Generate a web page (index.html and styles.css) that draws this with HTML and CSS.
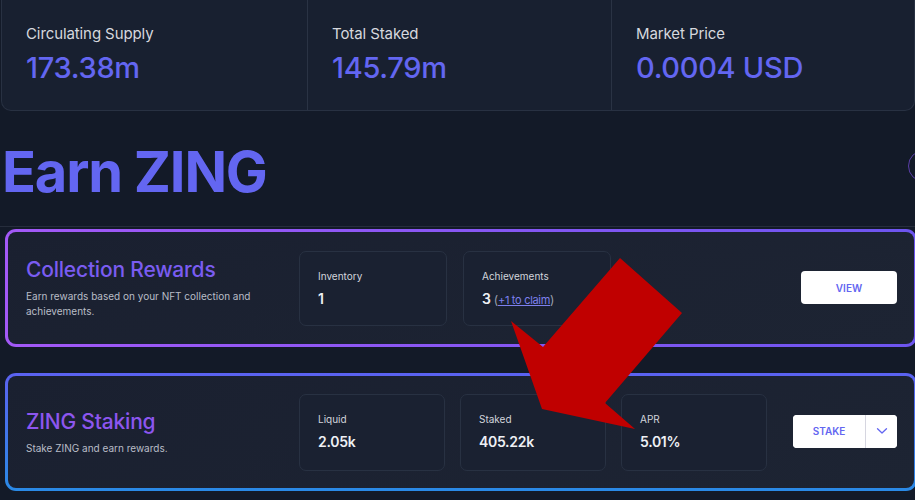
FILE: index.html
```html
<!DOCTYPE html>
<html>
<head>
<meta charset="utf-8">
<link rel="stylesheet" href="styles.css">
</head>
<body>
<div class="page">
  <div class="stats">
    <div class="stat">
      <div class="stat-label">Circulating Supply</div>
      <div class="stat-value">173.38m</div>
    </div>
    <div class="stat">
      <div class="stat-label">Total Staked</div>
      <div class="stat-value">145.79m</div>
    </div>
    <div class="stat">
      <div class="stat-label">Market Price</div>
      <div class="stat-value">0.0004 USD</div>
    </div>
  </div>

  <div class="heading-row">
    <h1 class="title">Earn ZING</h1>
    <div class="round-btn"></div>
  </div>
  <div class="divider"></div>

  <div class="card card-purple">
    <div class="card-intro">
      <h2 class="card-title title-collection">Collection Rewards</h2>
      <p class="card-desc">Earn rewards based on your NFT collection and achievements.</p>
    </div>
    <div class="boxes">
      <div class="box box-wide">
        <div class="box-label">Inventory</div>
        <div class="box-value">1</div>
      </div>
      <div class="box box-wide">
        <div class="box-label">Achievements</div>
        <div class="box-value">3 <span class="paren">(</span><a class="claim">+1 to claim</a><span class="paren">)</span></div>
      </div>
    </div>
    <div class="actions">
      <button class="btn btn-view">VIEW</button>
    </div>
  </div>

  <div class="card card-blue">
    <div class="card-intro">
      <h2 class="card-title title-staking">ZING Staking</h2>
      <p class="card-desc">Stake ZING and earn rewards.</p>
    </div>
    <div class="boxes boxes-three">
      <div class="box">
        <div class="box-label">Liquid</div>
        <div class="box-value">2.05k</div>
      </div>
      <div class="box">
        <div class="box-label">Staked</div>
        <div class="box-value">405.22k</div>
      </div>
      <div class="box">
        <div class="box-label">APR</div>
        <div class="box-value">5.01%</div>
      </div>
    </div>
    <div class="actions">
      <div class="split-btn">
        <button class="split-main">STAKE</button>
        <button class="split-toggle">
          <svg width="12" height="8" viewBox="0 0 12 8"><path d="M1.5 1.8 L6 6 L10.5 1.8" fill="none" stroke="#6366f1" stroke-width="1.3" stroke-linecap="round" stroke-linejoin="round"/></svg>
        </button>
      </div>
    </div>
  </div>

  <svg class="arrow" width="915" height="500" viewBox="0 0 915 500">
    <polygon points="620,258 682,313 605,403 635,429 542,409 511,321 543,347" fill="#c00000"/>
  </svg>
</div>
</body>
</html>
```

FILE: styles.css
```css
* { box-sizing: border-box; }

html, body {
  margin: 0;
  padding: 0;
  width: 915px;
  height: 500px;
  overflow: hidden;
  background: #131a28;
  font-family: Inter, "Noto Sans", "DejaVu Sans", sans-serif;
}

.page {
  position: relative;
  width: 915px;
  height: 500px;
}

/* Top stats panel */
.stats {
  display: grid;
  grid-template-columns: 305px 304px 1fr;
  margin-left: 1px;
  width: 914px;
  height: 111px;
  background: #182030;
  border: 1px solid #283142;
  border-top: 0;
  border-radius: 0 0 10px 10px;
}

.stat {
  padding: 24px 0 0 24px;
}

.stat + .stat {
  border-left: 1px solid #2a3344;
}

.stat-label {
  font-size: 15px;
  line-height: 20px;
  color: #d6d8de;
  letter-spacing: -0.1px;
}

.stat-value {
  margin-top: 7px;
  font-size: 29px;
  line-height: 34px;
  color: #6366f1;
  font-weight: 500;
  letter-spacing: -0.3px;
}

/* Heading */
.heading-row {
  display: flex;
  align-items: center;
  justify-content: space-between;
  height: 115px;
}

.title {
  margin: 6px 0 0 2px;
  font-size: 56px;
  line-height: 64px;
  font-weight: 700;
  color: #6366f1;
  letter-spacing: -1.2px;
}

.round-btn {
  width: 32px;
  height: 32px;
  margin-right: -25px;
  border: 1.5px solid #5a3ea8;
  border-radius: 50%;
  margin-top: -6px;
}

.divider {
  height: 1px;
  background: #262d3c;
  width: 915px;
}

/* Cards */
.card {
  display: flex;
  align-items: center;
  margin-left: 5px;
  width: 912px;
  border: 3px solid transparent;
  border-radius: 11px;
  padding: 0 17px 0 18px;
}

.card-purple {
  margin-top: 2px;
  height: 118px;
  background:
    linear-gradient(160deg, #1a2030, #1d2433) padding-box,
    linear-gradient(90deg, #a359f7, #6d55ef) border-box;
}

.card-blue {
  margin-top: 26px;
  height: 118px;
  background:
    linear-gradient(160deg, #1a2030, #1d2433) padding-box,
    linear-gradient(180deg, #5b62f1, #2a8ae6) border-box;
}

.card-intro {
  width: 273px;
  flex: none;
}

.card-title {
  margin: 0;
  font-size: 21px;
  line-height: 26px;
  font-weight: 500;
  letter-spacing: -0.2px;
}

.title-collection { color: #7a5cf1; }
.title-staking { color: #8d56ef; }

.card-desc {
  margin: 6px 0 0 0;
  font-size: 10px;
  line-height: 15px;
  color: #b9bdc7;
  width: 240px;
}

.boxes {
  display: flex;
  gap: 16px;
}

.boxes-three {
  gap: 15px;
}

.box {
  width: 146px;
  height: 77px;
  border: 1px solid #283142;
  border-radius: 7px;
  background: #1a2131;
  padding: 18px 0 0 18px;
}

.box-wide {
  width: 148px;
  height: 75px;
  padding-top: 18px;
}

.box-label {
  font-size: 10px;
  line-height: 13px;
  color: #d2d5dc;
}

.box-value {
  margin-top: 7px;
  font-size: 14px;
  line-height: 18px;
  font-weight: 600;
  color: #eef0f4;
  letter-spacing: -0.3px;
}

.paren {
  font-weight: 400;
  color: #9aa0ad;
  font-size: 12px;
}

.claim {
  font-weight: 400;
  font-size: 11px;
  color: #7d80ee;
  text-decoration: underline;
}

.actions {
  margin-left: auto;
  display: flex;
}

.btn {
  font-family: inherit;
  border: 0;
  background: #ffffff;
  border-radius: 4px;
  color: #6366f1;
  font-weight: 600;
  font-size: 10px;
}

.btn-view {
  width: 96px;
  height: 33px;
  margin-top: -1px;
}

.split-btn {
  display: flex;
  background: #ffffff;
  border-radius: 4px;
  height: 33px;
  width: 104px;
  margin-top: -2px;
  overflow: hidden;
}

.split-main {
  font-family: inherit;
  width: 73px;
  border: 0;
  border-right: 1px solid #d6d6e0;
  background: #ffffff;
  color: #6366f1;
  font-weight: 600;
  font-size: 10px;
  padding: 0;
}

.split-toggle {
  flex: 1;
  border: 0;
  background: #ffffff;
  display: flex;
  align-items: center;
  justify-content: center;
  padding: 0;
}

/* Annotation arrow overlay */
.arrow {
  position: absolute;
  left: 0;
  top: 0;
  pointer-events: none;
}
```
